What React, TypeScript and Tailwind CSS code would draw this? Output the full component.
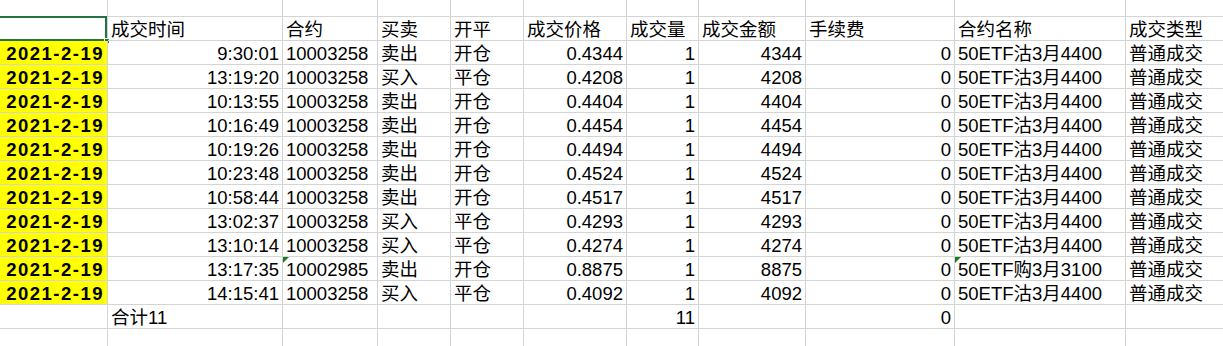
import React from "react";

type Trade = {
  time: string;
  code: string;
  side: string;
  open: string;
  price: string;
  qty: string;
  amount: string;
  fee: string;
  name: string;
  kind: string;
  flag?: boolean;
};

const trades: Trade[] = [
  { time: "9:30:01", code: "10003258", side: "卖出", open: "开仓", price: "0.4344", qty: "1", amount: "4344", fee: "0", name: "50ETF沽3月4400", kind: "普通成交" },
  { time: "13:19:20", code: "10003258", side: "买入", open: "平仓", price: "0.4208", qty: "1", amount: "4208", fee: "0", name: "50ETF沽3月4400", kind: "普通成交" },
  { time: "10:13:55", code: "10003258", side: "卖出", open: "开仓", price: "0.4404", qty: "1", amount: "4404", fee: "0", name: "50ETF沽3月4400", kind: "普通成交" },
  { time: "10:16:49", code: "10003258", side: "卖出", open: "开仓", price: "0.4454", qty: "1", amount: "4454", fee: "0", name: "50ETF沽3月4400", kind: "普通成交" },
  { time: "10:19:26", code: "10003258", side: "卖出", open: "开仓", price: "0.4494", qty: "1", amount: "4494", fee: "0", name: "50ETF沽3月4400", kind: "普通成交" },
  { time: "10:23:48", code: "10003258", side: "卖出", open: "开仓", price: "0.4524", qty: "1", amount: "4524", fee: "0", name: "50ETF沽3月4400", kind: "普通成交" },
  { time: "10:58:44", code: "10003258", side: "卖出", open: "开仓", price: "0.4517", qty: "1", amount: "4517", fee: "0", name: "50ETF沽3月4400", kind: "普通成交" },
  { time: "13:02:37", code: "10003258", side: "买入", open: "平仓", price: "0.4293", qty: "1", amount: "4293", fee: "0", name: "50ETF沽3月4400", kind: "普通成交" },
  { time: "13:10:14", code: "10003258", side: "买入", open: "平仓", price: "0.4274", qty: "1", amount: "4274", fee: "0", name: "50ETF沽3月4400", kind: "普通成交" },
  { time: "13:17:35", code: "10002985", side: "卖出", open: "开仓", price: "0.8875", qty: "1", amount: "8875", fee: "0", name: "50ETF购3月3100", kind: "普通成交", flag: true },
  { time: "14:15:41", code: "10003258", side: "买入", open: "平仓", price: "0.4092", qty: "1", amount: "4092", fee: "0", name: "50ETF沽3月4400", kind: "普通成交" },
];

const headers = ["", "成交时间", "合约", "买卖", "开平", "成交价格", "成交量", "成交金额", "手续费", "合约名称", "成交类型"];

// green "number stored as text" marker in the top-left corner
function Flag() {
  return (
    <span className="absolute left-0 top-0 w-0 h-0 border-t-[6px] border-r-[6px] border-t-[#1e7a1e] border-r-transparent" />
  );
}

function Cell({
  children,
  right,
  bold,
  yellow,
  flag,
}: {
  children?: React.ReactNode;
  right?: boolean;
  bold?: boolean;
  yellow?: boolean;
  flag?: boolean;
}) {
  return (
    <div
      className={`relative flex items-end pb-[1px] px-[3px] border-r border-b border-[#d4d4d4] whitespace-nowrap overflow-hidden ${
        right ? "justify-end" : "justify-start"
      } ${bold ? "font-bold tracking-[1.5px]" : ""} ${yellow ? "bg-[#ffff00]" : ""}`}
    >
      {flag && <Flag />}
      {children}
    </div>
  );
}

export default function App() {
  return (
    <div className="w-[1223px] h-[346px] overflow-hidden bg-white text-black font-['Liberation_Sans','Noto_Sans_CJK_SC',sans-serif] text-[18.5px] leading-none">
      <div className="grid grid-cols-[108px_175px_95px_73px_73px_103px_72px_107px_149px_171px_120px] grid-rows-[17px_repeat(14,24px)]">
        {/* row 1: empty */}
        {headers.map((_, i) => (
          <Cell key={"e" + i} />
        ))}

        {/* row 2: headers, A2 selected */}
        <div className="relative border-r border-b border-[#d4d4d4]">
          <div className="absolute -left-[2px] -top-[1px] right-0 -bottom-[1px] border-2 border-[#217346]" />
          <div className="absolute -right-[3px] -bottom-[4px] w-[6px] h-[6px] bg-[#217346] border border-white" />
        </div>
        {headers.slice(1).map((h) => (
          <Cell key={h}>{h}</Cell>
        ))}

        {/* data rows */}
        {trades.map((t, i) => (
          <React.Fragment key={i}>
            <Cell right bold yellow>2021-2-19</Cell>
            <Cell right>{t.time}</Cell>
            <Cell flag={t.flag}>{t.code}</Cell>
            <Cell>{t.side}</Cell>
            <Cell>{t.open}</Cell>
            <Cell right>{t.price}</Cell>
            <Cell right>{t.qty}</Cell>
            <Cell right>{t.amount}</Cell>
            <Cell right>{t.fee}</Cell>
            <Cell flag={t.flag}>{t.name}</Cell>
            <Cell>{t.kind}</Cell>
          </React.Fragment>
        ))}

        {/* totals */}
        <Cell />
        <Cell>合计11</Cell>
        <Cell />
        <Cell />
        <Cell />
        <Cell />
        <Cell right>11</Cell>
        <Cell />
        <Cell right>0</Cell>
        <Cell />
        <Cell />

        {/* trailing empty row */}
        {headers.map((_, i) => (
          <Cell key={"t" + i} />
        ))}
      </div>
    </div>
  );
}
